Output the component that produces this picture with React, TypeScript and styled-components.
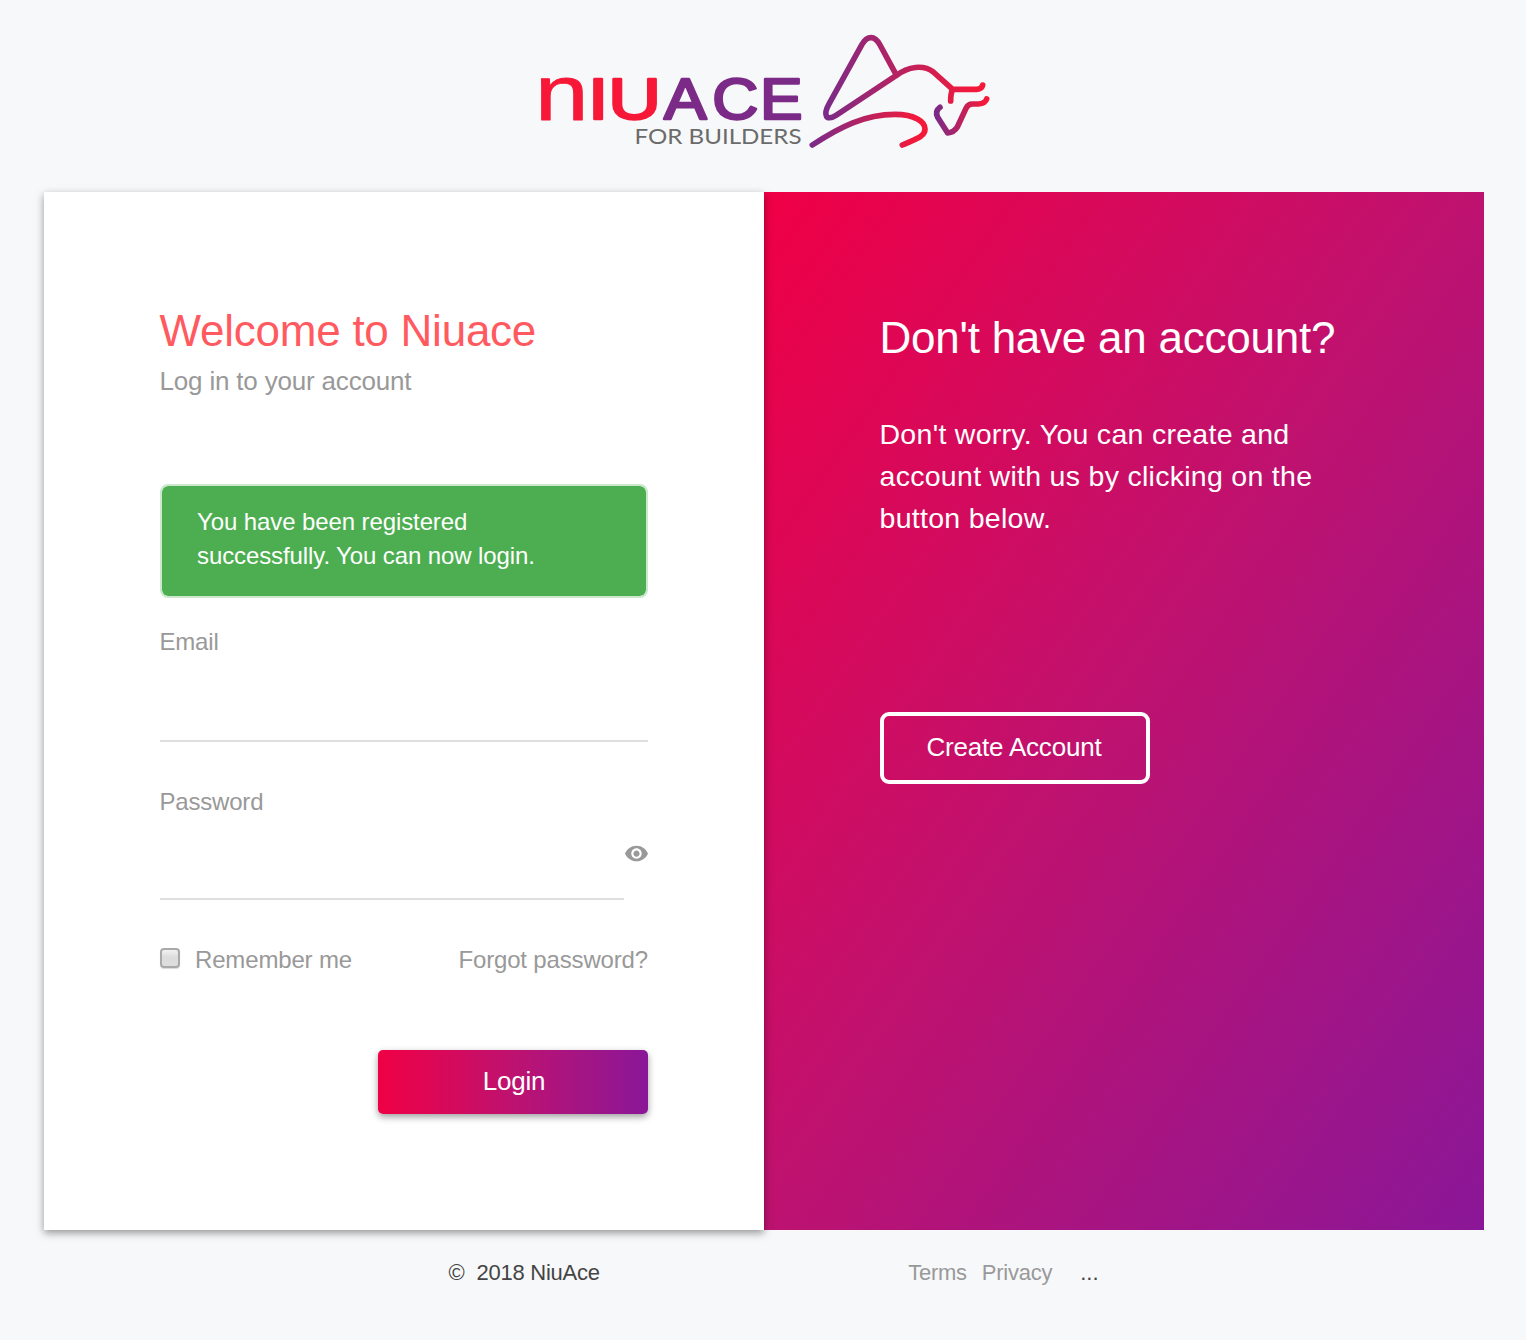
import React from "react";
import styled, { createGlobalStyle } from "styled-components";
import { MdVisibility } from "react-icons/md";

const GlobalStyle = createGlobalStyle`
  *, *::before, *::after { box-sizing: border-box; }
  body {
    margin: 0;
    background: #f7f8fa;
    font-family: "Liberation Sans", Arial, Helvetica, sans-serif;
    color: #999;
  }
`;

const Page = styled.div`
  display: flex;
  flex-direction: column;
  height: 1340px;
  padding: 0 42px 0 44px;
`;

const Header = styled.header`
  display: flex;
  justify-content: center;
  height: 192px;
  padding-top: 30px;
`;

const Main = styled.main`
  display: grid;
  grid-template-columns: 1fr 1fr;
  height: 1038px;
`;

const LoginPanel = styled.section`
  z-index: 1;
  padding: 112px 116px 0;
  background: #fff;
  box-shadow: 0 3px 8px rgba(0, 0, 0, 0.4);
`;

const SignupPanel = styled.section`
  padding: 119px 116px 0;
  background: linear-gradient(to bottom right, #f00045, #be1270, #8a1798);
  color: #fff;
`;

const Title = styled.h1<{ $color: string }>`
  margin: 0 0 0 -0.5px;
  font-size: 44px;
  font-weight: 400;
  line-height: 54px;
  white-space: nowrap;
  letter-spacing: -0.24px;
  color: ${(p) => p.$color};
`;

const Subtitle = styled.p`
  margin: 0 0 0 -0.5px;
  font-size: 26px;
  line-height: 46px;
  letter-spacing: -0.18px;
`;

const Alert = styled.div`
  height: 114px;
  margin-top: 80px;
  padding: 19px 80px 0 35px;
  border: 2px solid #cbe8cd;
  border-radius: 8px;
  background: #4cae50;
  background-clip: padding-box;
  color: #fff;
  font-size: 24px;
  line-height: 34px;
  letter-spacing: -0.1px;
`;

const Form = styled.form`
  display: flex;
  flex-direction: column;
`;

const Label = styled.label<{ $top: number }>`
  margin-top: ${(p) => p.$top}px;
  margin-left: -0.5px;
  font-size: 24px;
  line-height: 30px;
  letter-spacing: -0.2px;
`;

const FieldRow = styled.div<{ $height: number }>`
  display: flex;
  height: ${(p) => p.$height}px;
`;

const Input = styled.input`
  flex: 1;
  min-width: 0;
  height: 100%;
  padding: 0;
  border: 0;
  border-bottom: 2px solid #dedede;
  border-radius: 0;
  outline: 0;
  background: transparent;
  font-size: 26px;
`;

const RevealButton = styled.button`
  display: flex;
  flex: none;
  justify-content: center;
  align-items: flex-start;
  width: 24px;
  padding: 24px 0 0 1px;
  border: 0;
  background: none;
  color: #999;
`;

const RevealIcon = styled(MdVisibility)`
  flex: none;
  width: 25px;
  height: 25px;
`;

const Options = styled.div`
  display: flex;
  justify-content: space-between;
  align-items: center;
  height: 30px;
  margin-top: 45px;
  font-size: 24px;
  letter-spacing: -0.16px;
`;

const Remember = styled.label`
  display: flex;
  align-items: center;
  gap: 15px;
`;

const Checkbox = styled.input`
  appearance: none;
  width: 20px;
  height: 20px;
  margin: -4px 0 0;
  border: 2px solid #a9a9a9;
  border-radius: 4px;
  background: linear-gradient(#f2f2f2, #dcdcdc 45%, #dedede);
  box-shadow: 0 1px 1px rgba(0, 0, 0, 0.15);
`;

const LoginButton = styled.button`
  align-self: flex-end;
  width: 270px;
  height: 64px;
  margin-top: 75px;
  padding: 0 0 1px 2px;
  border: 0;
  border-radius: 5px;
  background: linear-gradient(to right, #f00045, #be1270, #8a1798);
  box-shadow: 0 3px 7px rgba(0, 0, 0, 0.38);
  color: #fff;
  font-family: inherit;
  font-size: 26px;
  letter-spacing: -0.2px;
`;

const Lead = styled.p`
  margin: 48px 0 0 -0.5px;
  font-size: 28.5px;
  line-height: 42px;
  letter-spacing: 0.29px;
`;

const CreateButton = styled.button`
  width: 270px;
  height: 72px;
  margin-top: 173px;
  padding: 0 2px 1px 0;
  border: 4px solid #fff;
  border-radius: 9px;
  background: transparent;
  color: #fff;
  font-family: inherit;
  font-size: 26px;
  letter-spacing: -0.2px;
`;

const Footer = styled.footer`
  display: flex;
  justify-content: space-between;
  width: 650px;
  margin: 30px 0 0 404.5px;
  font-size: 22px;
  line-height: 26px;
  letter-spacing: -0.25px;
  color: #444;
`;

const Copyright = styled.span`
  display: flex;
  gap: 12px;
`;

const Links = styled.nav`
  display: flex;
  gap: 15px;
`;

const FooterLink = styled.a`
  color: #999;
`;

const More = styled.span`
  margin-left: 13px;
  letter-spacing: 0;
`;

function Logo() {
  return (
    <svg width="460" height="124" viewBox="534 30 460 124" role="img">
      <defs>
        <linearGradient id="bull">
          <stop offset="0" stopColor="#7b2b87" />
          <stop offset="0.9" stopColor="#f01a3d" />
          <stop offset="1" stopColor="#f71838" />
        </linearGradient>
      </defs>
      <g
        fontFamily="Liberation Sans, Arial, sans-serif"
        fontSize="57"
        strokeWidth="2.5"
        strokeLinejoin="round"
      >
        <g fill="#f71838" stroke="#f71838">
          <text
            x="535"
            y="119.6"
            fontSize="77"
            strokeWidth="0.8"
            textLength="53.5"
            lengthAdjust="spacingAndGlyphs"
          >
            n
          </text>
          <text x="588" y="118.7" textLength="73" lengthAdjust="spacingAndGlyphs">IU</text>
        </g>
        <text
          x="592.9 636 678.6"
          y="118.7"
          transform="scale(1.12 1)"
          fill="#7b2b87"
          stroke="#7b2b87"
        >
          ACE
        </text>
      </g>
      <text
        x="634.5"
        y="144"
        fill="#6b6b6b"
        fontFamily="Lato, sans-serif"
        fontSize="21.5"
        textLength="167"
        lengthAdjust="spacingAndGlyphs"
      >
        FOR BUILDERS
      </text>
      <g
        transform="translate(800 25) scale(0.33333)"
        fill="none"
        stroke="url(#bull)"
        strokeWidth="17"
        strokeLinecap="round"
        strokeLinejoin="round"
      >
        <path d="M288 148L240 60Q228 38 213 38Q198 38 186 58L88 235C68 270 78 290 108 271L288 152C325 124 370 118 400 141L458 193H530Q546 192 548 180M458 193Q452 205 452 228" />
        <path d="M420 247Q404 259 413 277L443 324Q462 322 472 306L498 250Q504 237 517 237H535Q556 235 560 222" />
        <path d="M37 360C120 305 195 268 285 268C345 268 375 290 375 312C375 336 345 342 307 360" />
      </g>
    </svg>
  );
}

export default function App() {
  return (
    <>
      <GlobalStyle />
      <Page>
        <Header>
          <Logo />
        </Header>
        <Main>
          <LoginPanel>
            <Title $color="#ff5a5f">Welcome to Niuace</Title>
            <Subtitle>Log in to your account</Subtitle>
            <Form>
              <Alert>You have been registered successfully. You can now login.</Alert>
              <Label $top={29} htmlFor="email">Email</Label>
              <FieldRow $height={85}>
                <Input id="email" type="email" />
              </FieldRow>
              <Label $top={45} htmlFor="password">Password</Label>
              <FieldRow $height={83}>
                <Input id="password" type="password" />
                <RevealButton type="button">
                  <RevealIcon />
                </RevealButton>
              </FieldRow>
              <Options>
                <Remember>
                  <Checkbox type="checkbox" />
                  Remember me
                </Remember>
                <span>Forgot password?</span>
              </Options>
              <LoginButton type="button">Login</LoginButton>
            </Form>
          </LoginPanel>
          <SignupPanel>
            <Title as="h2" $color="#fff">Don't have an account?</Title>
            <Lead>
              Don't worry. You can create and account with us by clicking on the button below.
            </Lead>
            <CreateButton type="button">Create Account</CreateButton>
          </SignupPanel>
        </Main>
        <Footer>
          <Copyright>
            <span>©</span>
            <span>2018 NiuAce</span>
          </Copyright>
          <Links>
            <FooterLink>Terms</FooterLink>
            <FooterLink>Privacy</FooterLink>
            <More>...</More>
          </Links>
        </Footer>
      </Page>
    </>
  );
}
